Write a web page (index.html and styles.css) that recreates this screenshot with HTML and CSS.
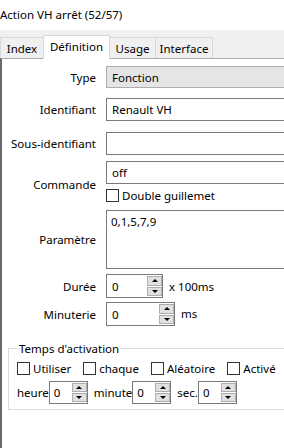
FILE: index.html
```html
<!DOCTYPE html>
<html lang="fr">
<head>
    <meta charset="UTF-8">
    <title>Action VH arrêt</title>
    <link rel="stylesheet" href="styles.css">
</head>
<body>

<div class="title">Action VH arrêt (52/57)</div>

<div class="tabs">
    <div class="tab">Index</div>
    <div class="tab active">Définition</div>
    <div class="tab">Usage</div>
    <div class="tab">Interface</div>
</div>

<div class="panel">
    <div class="row r-type">
        <div class="lbl">Type</div>
        <div class="field select">Fonction</div>
    </div>
    <div class="row r-ident">
        <div class="lbl">Identifiant</div>
        <div class="field">Renault VH</div>
    </div>
    <div class="row r-sous">
        <div class="lbl">Sous-identifiant</div>
        <div class="field"></div>
    </div>
    <div class="row r-cmd">
        <div class="lbl">Commande</div>
        <div class="stack">
            <div class="field">off</div>
            <div class="check"><span class="box"></span>Double guillemet</div>
        </div>
    </div>
    <div class="row r-param">
        <div class="lbl">Paramètre</div>
        <div class="field area">0,1,5,7,9</div>
    </div>
    <div class="row r-duree">
        <div class="lbl">Durée</div>
        <div class="spin w36"><span class="val">0</span><span class="btns"><span class="btn up"></span><span class="btn down"></span></span></div>
        <span class="unit">x 100ms</span>
    </div>
    <div class="row r-minut">
        <div class="lbl">Minuterie</div>
        <div class="spin w48"><span class="val">0</span><span class="btns"><span class="btn up"></span><span class="btn down"></span></span></div>
        <span class="unit top">ms</span>
    </div>

    <fieldset class="group">
        <legend>Temps d'activation</legend>
        <div class="checks">
            <div class="check"><span class="box"></span>Utiliser</div>
            <div class="check"><span class="box"></span>chaque</div>
            <div class="check"><span class="box"></span>Aléatoire</div>
            <div class="check"><span class="box"></span>Activé</div>
        </div>
        <div class="times">
            <span class="tlbl">heure</span>
            <div class="spin small"><span class="val">0</span><span class="btns"><span class="btn up"></span><span class="btn down"></span></span></div>
            <span class="tlbl gap">minute</span>
            <div class="spin small"><span class="val">0</span><span class="btns"><span class="btn up"></span><span class="btn down"></span></span></div>
            <span class="tlbl gap">sec.</span>
            <div class="spin small"><span class="val">0</span><span class="btns"><span class="btn up"></span><span class="btn down"></span></span></div>
        </div>
    </fieldset>
</div>

</body>
</html>
```

FILE: styles.css
```css
html, body { margin: 0; height: 100%; overflow: hidden; }
body { background: #fff; color: #000; font-family: "Noto Sans", "Open Sans", sans-serif; font-size: 11.5px; }

.title { height: 30px; display: flex; align-items: center; padding-bottom: 1px; box-sizing: border-box; }

.tabs { background: #f0f0f0; height: 28px; display: flex; align-items: flex-end; }
.tab { height: 21px; box-sizing: border-box; border: 1px solid #d9d9d9; border-bottom: none; border-left: none; background: #f0f0f0; display: flex; align-items: center; justify-content: center; flex: none; white-space: nowrap; }
.tab:first-child { width: 44px; border-left: 1px solid #d9d9d9; }
.tab.active { height: 24px; margin-bottom: -1px; background: #fff; width: 67px; padding-bottom: 3px; border-left: 1px solid #d9d9d9; margin-left: -1px; position: relative; z-index: 1; }
.tab:nth-child(3) { width: 46px; }
.tab:nth-child(4) { width: 57px; }

.panel { height: 400px; border-top: 1px solid #adadad; border-left: 2px solid #6a6a6a; padding-top: 7px; box-sizing: border-box; }

.row { display: flex; align-items: center; }
.lbl { width: 94px; margin-right: 10px; text-align: right; flex: none; }
.field { width: 200px; height: 23px; box-sizing: border-box; border: 1px solid #7a7a7a; padding: 0 5px; display: flex; align-items: center; flex: none; }
.field.select { height: 22px; background: #e5e5e5; border-color: #adadad; }
.field.area { height: 59px; align-items: flex-start; padding-top: 3px; padding-left: 4px; }

.r-ident { margin-top: 10px; }
.r-sous { margin-top: 11px; }
.r-cmd { margin-top: 6px; }
.r-param { margin-top: 3px; }
.r-duree { margin-top: 5px; }
.r-minut { margin-top: 4px; }

.stack { display: flex; flex-direction: column; }
.check { display: flex; align-items: center; height: 23px; }
.box { width: 13px; height: 13px; box-sizing: border-box; border: 1px solid #333; background: #fff; margin-right: 3px; }

.spin { height: 24px; box-sizing: border-box; border: 1px solid #7a7a7a; display: flex; flex: none; }
.spin .val { padding-left: 5px; display: flex; align-items: center; }
.spin.w36 .val { width: 35px; }
.spin.w48 .val { width: 47px; }
.spin.small { height: 23px; }
.spin.small .val { width: 22px; padding-left: 4px; box-sizing: border-box; }
.btns { width: 15px; display: flex; flex-direction: column; gap: 1px; padding: 1px 0; background: #fff; }
.btn { flex: 1; background: #e1e1e1; border: 1px solid #adadad; display: flex; align-items: center; justify-content: center; }
.btn::after { content: ""; border-left: 3px solid transparent; border-right: 3px solid transparent; }
.btn.up::after { border-bottom: 3px solid #000; }
.btn.down::after { border-top: 3px solid #000; }

.unit { margin-left: 6px; }
.unit.top { align-self: flex-start; margin-top: 4px; }

.group { margin: 15px 0 0 6px; padding: 4px 0 8px 8px; width: 300px; height: 69px; box-sizing: border-box; border: 1px solid #dcdcdc; border-right: none; }
.group legend { padding: 0 1px; margin-left: 1px; }
.checks { display: flex; gap: 12px; margin-top: -1px; }
.checks .check { height: 18px; }
.times { display: flex; align-items: center; margin-top: 4px; }
.tlbl.gap { margin-left: 6px; }
```
